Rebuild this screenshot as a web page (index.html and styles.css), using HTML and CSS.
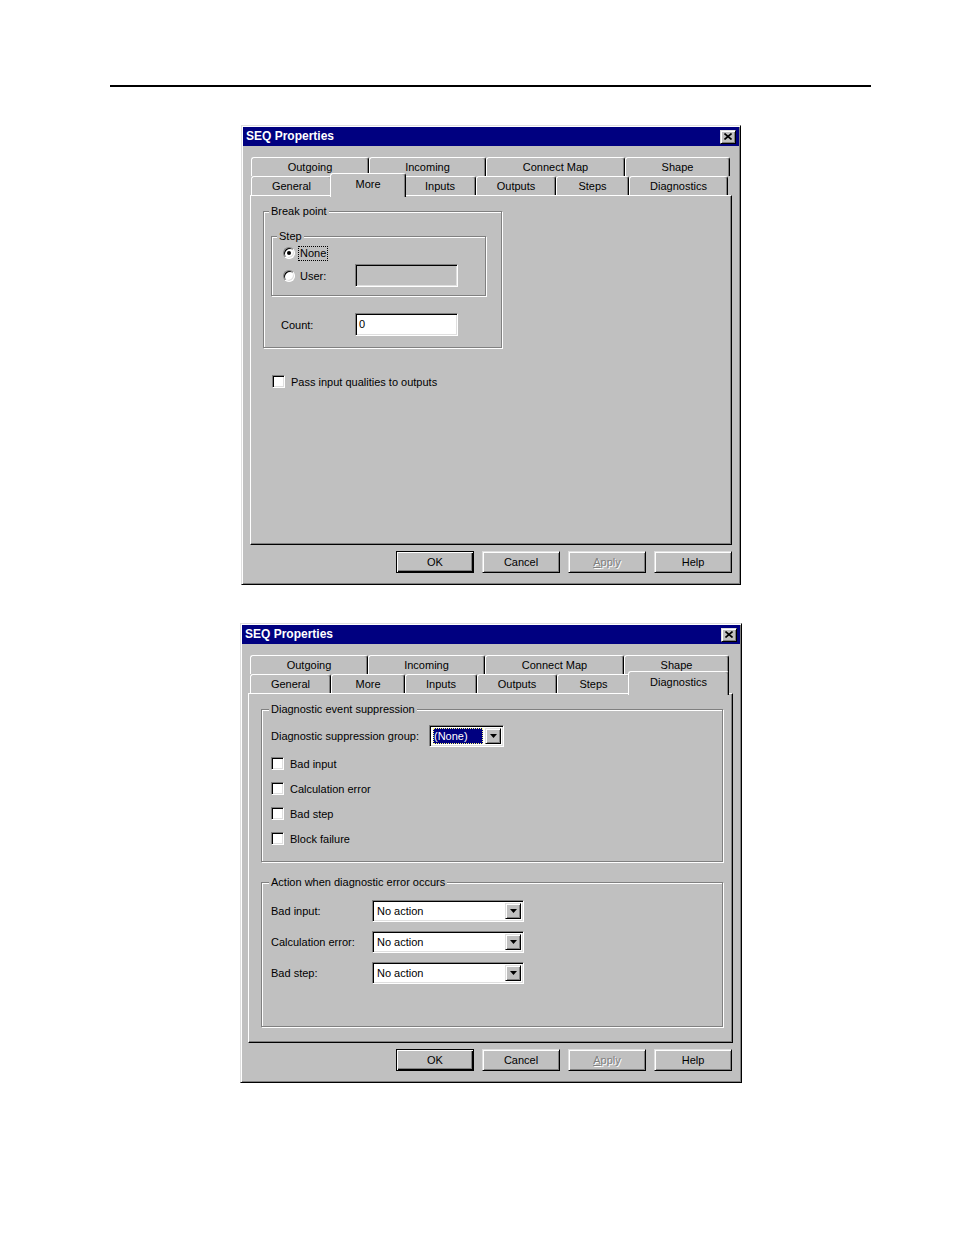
FILE: index.html
```html
<!DOCTYPE html>
<html>
<head>
<meta charset="utf-8">
<title>SEQ Properties</title>
<link rel="stylesheet" href="styles.css">
</head>
<body>
<div class="page">
  <div class="rule"></div>

  <div class="dialog d1">
    <div class="titlebar">
      <span class="title">SEQ Properties</span>
      <span class="close raised"><svg width="8" height="7" viewBox="0 0 8 7"><path d="M0.5 0.5 L7.5 6.5 M7.5 0.5 L0.5 6.5" stroke="#000" stroke-width="1.6" fill="none"/></svg></span>
    </div>
    <div class="tabrow back">
      <div class="tab w1">Outgoing</div>
      <div class="tab w2">Incoming</div>
      <div class="tab w3">Connect Map</div>
      <div class="tab w4">Shape</div>
    </div>
    <div class="tabrow front">
      <div class="tab w5">General</div>
      <div class="tab w6 sel">More</div>
      <div class="tab w7">Inputs</div>
      <div class="tab w8">Outputs</div>
      <div class="tab w9">Steps</div>
      <div class="tab w10">Diagnostics</div>
    </div>
    <div class="panel">
      <fieldset class="group bp">
        <legend>Break point</legend>
        <fieldset class="group step">
          <legend>Step</legend>
          <div class="radio-row r-none">
            <span class="radio on"></span><span class="focus">None</span>
          </div>
          <div class="radio-row r-user">
            <span class="radio"></span><span class="rlabel">User:</span><span class="field sunk disabled"></span>
          </div>
        </fieldset>
        <div class="count-row"><span class="clabel">Count:</span><span class="field sunk">0</span></div>
      </fieldset>
      <div class="check-row pass"><span class="check sunk"></span><span>Pass input qualities to outputs</span></div>
    </div>
    <div class="buttons">
      <div class="btn default">OK</div>
      <div class="btn raised">Cancel</div>
      <div class="btn raised disabled"><span><u>A</u>pply</span></div>
      <div class="btn raised">Help</div>
    </div>
  </div>

  <div class="dialog d2">
    <div class="titlebar">
      <span class="title">SEQ Properties</span>
      <span class="close raised"><svg width="8" height="7" viewBox="0 0 8 7"><path d="M0.5 0.5 L7.5 6.5 M7.5 0.5 L0.5 6.5" stroke="#000" stroke-width="1.6" fill="none"/></svg></span>
    </div>
    <div class="tabrow back">
      <div class="tab w1">Outgoing</div>
      <div class="tab w2">Incoming</div>
      <div class="tab w3">Connect Map</div>
      <div class="tab w4">Shape</div>
    </div>
    <div class="tabrow front">
      <div class="tab w5">General</div>
      <div class="tab w6">More</div>
      <div class="tab w7">Inputs</div>
      <div class="tab w8">Outputs</div>
      <div class="tab w9">Steps</div>
      <div class="tab w10 sel">Diagnostics</div>
    </div>
    <div class="panel">
      <fieldset class="group diag">
        <legend>Diagnostic event suppression</legend>
        <div class="sup-row">
          <span class="slabel">Diagnostic suppression group:</span>
          <span class="combo sunk small">
            <span class="val"><span class="hl">(None)</span></span>
            <span class="dd raised"><svg width="7" height="4" viewBox="0 0 7 4"><path d="M0 0 H7 L3.5 4 Z" fill="#000"/></svg></span>
          </span>
        </div>
        <div class="check-row"><span class="check sunk"></span><span>Bad input</span></div>
        <div class="check-row"><span class="check sunk"></span><span>Calculation error</span></div>
        <div class="check-row"><span class="check sunk"></span><span>Bad step</span></div>
        <div class="check-row"><span class="check sunk"></span><span>Block failure</span></div>
      </fieldset>
      <fieldset class="group action">
        <legend>Action when diagnostic error occurs</legend>
        <div class="act-row">
          <span class="alabel">Bad input:</span>
          <span class="combo sunk"><span class="val">No action</span><span class="dd raised"><svg width="7" height="4" viewBox="0 0 7 4"><path d="M0 0 H7 L3.5 4 Z" fill="#000"/></svg></span></span>
        </div>
        <div class="act-row">
          <span class="alabel">Calculation error:</span>
          <span class="combo sunk"><span class="val">No action</span><span class="dd raised"><svg width="7" height="4" viewBox="0 0 7 4"><path d="M0 0 H7 L3.5 4 Z" fill="#000"/></svg></span></span>
        </div>
        <div class="act-row">
          <span class="alabel">Bad step:</span>
          <span class="combo sunk"><span class="val">No action</span><span class="dd raised"><svg width="7" height="4" viewBox="0 0 7 4"><path d="M0 0 H7 L3.5 4 Z" fill="#000"/></svg></span></span>
        </div>
      </fieldset>
    </div>
    <div class="buttons">
      <div class="btn default">OK</div>
      <div class="btn raised">Cancel</div>
      <div class="btn raised disabled"><span><u>A</u>pply</span></div>
      <div class="btn raised">Help</div>
    </div>
  </div>
</div>
</body>
</html>
```

FILE: styles.css
```css
html, body {
  margin: 0;
  background: #fff;
}
body {
  font-family: "Liberation Sans", Arial, sans-serif;
  font-size: 11px;
  color: #000;
}
.page {
  padding-top: 85px;
}
.rule {
  margin-left: 110px;
  width: 761px;
  height: 2px;
  background: #000;
}

/* ---------- dialog frame ---------- */
.dialog {
  box-sizing: border-box;
  background: #c0c0c0;
  border: 1px solid;
  border-color: #dfdfdf #000 #000 #dfdfdf;
  box-shadow: inset 1px 1px #fff, inset -1px -1px #808080;
  padding: 1px;
  height: 460px;
}
.d1 {
  margin: 38px 0 0 241px;
  width: 500px;
}
.d2 {
  margin: 38px 0 0 240px;
  width: 502px;
}

.titlebar {
  height: 19px;
  background: #000080;
  display: flex;
  align-items: center;
  justify-content: space-between;
  padding: 0 3px 0 3px;
}
.title {
  color: #fff;
  font-weight: bold;
  font-size: 12px;
  line-height: 19px;
}
.close {
  width: 16px;
  height: 14px;
  box-sizing: border-box;
  background: #c0c0c0;
  display: flex;
  align-items: center;
  justify-content: center;
}

.sunk {
  box-sizing: border-box;
  border: 1px solid;
  border-color: #808080 #fff #fff #808080;
  box-shadow: inset 1px 1px #000, inset -1px -1px #dfdfdf;
  background: #fff;
}
.raised {
  box-sizing: border-box;
  border: 1px solid;
  border-color: #dfdfdf #000 #000 #dfdfdf;
  box-shadow: inset 1px 1px #fff, inset -1px -1px #808080;
  background: #c0c0c0;
}

/* ---------- tabs ---------- */
.tabrow {
  display: flex;
  margin-left: 8px;
  height: 19px;
}
.back {
  margin-top: 11px;
}
.tab {
  box-sizing: border-box;
  height: 19px;
  border-top: 1px solid #fff;
  border-left: 1px solid #fff;
  border-right: 1px solid #000;
  box-shadow: inset -1px 0 #808080;
  border-radius: 3px 3px 0 0;
  background: #c0c0c0;
  text-align: center;
  line-height: 18px;
}
.w1 { width: 118px; }
.w2 { width: 117px; }
.w3 { width: 139px; }
.w4 { width: 105px; }
.w5 { width: 81px; }
.w6 { width: 74px; }
.w7 { width: 72px; }
.w8 { width: 80px; }
.w9 { width: 73px; }
.w10 { width: 99px; }
.tab.sel {
  position: relative;
  z-index: 1;
  height: 23px;
  margin: -3px -2px -1px -2px;
  padding: 0 2px;
  box-sizing: content-box;
  line-height: 20px;
}
.w6.sel { width: 70px; }
.w10.sel { width: 95px; }

/* ---------- panel ---------- */
.panel {
  box-sizing: border-box;
  margin-left: 7px;
  width: 482px;
  height: 350px;
  border-top: 1px solid #fff;
  border-left: 1px solid #fff;
  border-right: 1px solid #000;
  border-bottom: 1px solid #000;
  box-shadow: inset -1px -1px #808080;
  overflow: hidden;
}
.d2 .panel {
  margin-left: 6px;
  width: 485px;
}

.group {
  margin: 0;
  padding: 0;
  min-width: 0;
  box-sizing: border-box;
  border: 1px solid #808080;
  box-shadow: inset 1px 1px #fff, 1px 1px #fff;
}
.group legend {
  margin-left: 5px;
  padding: 0 2px;
  line-height: 13px;
  background: #c0c0c0;
}

/* break point */
.bp {
  margin: 9px 0 0 12px;
  width: 239px;
  padding: 0 0 11px 0;
}
.step {
  margin: 12px 0 0 7px;
  width: 215px;
  padding: 0 0 8px 0;
}
.radio-row {
  display: flex;
  align-items: center;
  padding-left: 11px;
}
.r-none {
  margin-top: 2px;
  height: 16px;
}
.r-user {
  margin-top: 3px;
  height: 23px;
}
.radio {
  box-sizing: border-box;
  width: 12px;
  height: 12px;
  border-radius: 50%;
  border: 1px solid;
  border-color: #808080 #fff #fff #808080;
  box-shadow: inset 1px 1px #000, inset -1px -1px #dfdfdf;
  background: #fff;
  display: flex;
  align-items: center;
  justify-content: center;
}
.radio.on::after {
  content: "";
  width: 4px;
  height: 4px;
  border-radius: 50%;
  background: #000;
}
.focus {
  margin-left: 3px;
  border: 1px dotted #000;
  padding: 0 1px;
  line-height: 13px;
}
.rlabel {
  margin-left: 5px;
  width: 55px;
}
.field {
  width: 103px;
  height: 23px;
  padding-left: 3px;
  line-height: 21px;
}
.field.disabled {
  background: #c0c0c0;
}
.count-row {
  margin: 17px 0 0 17px;
  display: flex;
  align-items: center;
  height: 23px;
}
.clabel {
  width: 74px;
}
.check-row {
  display: flex;
  align-items: center;
  gap: 6px;
  height: 13px;
}
.check {
  width: 13px;
  height: 13px;
  flex: none;
}
.pass {
  margin: 27px 0 0 21px;
}

/* diagnostics */
.diag {
  margin: 9px 0 0 12px;
  width: 462px;
  padding: 0 0 16px 9px;
}
.diag legend,
.action legend {
  margin-left: -2px;
}
.sup-row {
  margin-top: 9px;
  display: flex;
  align-items: center;
  height: 22px;
}
.slabel {
  width: 158px;
}
.diag .check-row {
  margin-top: 12px;
}
.diag .sup-row + .check-row {
  margin-top: 10px;
}
.combo {
  display: flex;
  width: 152px;
  height: 22px;
  padding: 2px;
  box-shadow: inset 1px 1px #000, inset -1px -1px #dfdfdf;
}
.combo.small {
  width: 75px;
}
.combo .val {
  flex: 1;
  padding-left: 2px;
  line-height: 16px;
  display: flex;
  align-items: center;
}
.combo .hl {
  margin-left: -1px;
  padding: 0 1px;
  width: 50px;
  height: 16px;
  box-sizing: border-box;
  background: #000080;
  color: #fff;
  outline: 1px dotted #ffff80;
  outline-offset: -1px;
  line-height: 16px;
}
.combo .dd {
  width: 16px;
  height: 16px;
  display: flex;
  align-items: center;
  justify-content: center;
  flex: none;
}
.action {
  margin: 14px 0 0 12px;
  width: 462px;
  padding: 0 0 42px 9px;
}
.act-row {
  margin-top: 9px;
  display: flex;
  align-items: center;
  height: 22px;
}
.action legend + .act-row {
  margin-top: 11px;
}
.alabel {
  width: 101px;
}

/* ---------- buttons ---------- */
.buttons {
  display: flex;
  justify-content: flex-end;
  gap: 8px;
  margin: 6px 0 0 7px;
  width: 482px;
}
.d2 .buttons {
  margin-left: 6px;
  width: 484px;
}
.btn {
  box-sizing: border-box;
  width: 78px;
  height: 22px;
  display: flex;
  align-items: center;
  justify-content: center;
}
.btn.default {
  border: 1px solid #000;
  box-shadow: inset 1px 1px #fff, inset -1px -1px #000, inset -2px -2px #808080;
  background: #c0c0c0;
}
.btn.disabled {
  color: #808080;
  text-shadow: 1px 1px #fff;
}
```
